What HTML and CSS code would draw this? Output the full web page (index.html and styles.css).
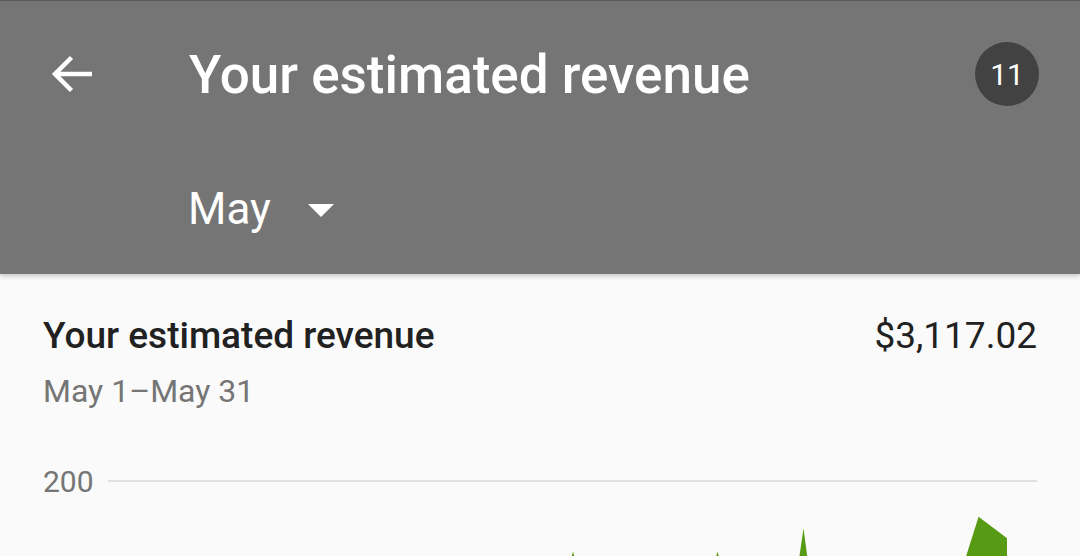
FILE: index.html
```html
<!DOCTYPE html>
<html>
<head>
<meta charset="utf-8">
<link rel="stylesheet" href="styles.css">
</head>
<body>
<header class="appbar">
  <div class="toprow">
    <svg class="back" width="44" height="44" viewBox="0 0 44 44">
      <path d="M42 22H5 M21.5 5.5 L5 22 L21.5 38.5" fill="none" stroke="#fff" stroke-width="4.5" stroke-linecap="butt" stroke-linejoin="miter"/>
    </svg>
    <h1 class="title">Your estimated revenue</h1>
    <div class="badge">11</div>
  </div>
  <div class="periodrow">
    <span class="period">May</span>
    <svg class="caret" width="26" height="13" viewBox="0 0 26 13"><path d="M0 0H26L13 13Z" fill="#fff"/></svg>
  </div>
</header>
<main class="content">
  <div class="summary">
    <div class="summary-head">
      <h2 class="summary-title">Your estimated revenue</h2>
      <span class="amount">$3,117.02</span>
    </div>
    <div class="range">May 1–May 31</div>
  </div>
  <div class="chart">
    <span class="axis-label">200</span>
    <svg class="plot" viewBox="0 0 929 91" preserveAspectRatio="none">
      <rect x="0" y="14" width="929" height="2" fill="#e0e0e0"/>
      <polygon points="461,100 465,85.7 469,100" fill="#579a13"/>
      <polygon points="605.5,100 609.5,85.7 613.5,100" fill="#579a13"/>
      <polygon points="690,100 695.5,62.3 700.5,100" fill="#579a13"/>
      <polygon points="855,100 870.6,50.7 899,72.3 899,100" fill="#579a13"/>
    </svg>
  </div>
</main>
</body>
</html>
```

FILE: styles.css
```css
* { box-sizing: border-box; }
html, body {
  margin: 0;
  padding: 0;
  width: 1080px;
  height: 556px;
  overflow: hidden;
  background: #fafafa;
  font-family: Roboto, "Noto Sans", "Liberation Sans", sans-serif;
}
.appbar {
  height: 274px;
  background: #757575;
  border-top: 1px solid #5a5a5a;
  box-shadow: 0 2px 5px rgba(0, 0, 0, 0.22);
  position: relative;
  z-index: 1;
}
.toprow {
  height: 145px;
  display: flex;
  align-items: center;
  padding: 0 41px 0 50px;
}
.back {
  flex: none;
  display: block;
}
.title {
  margin: 4px 0 0 95px;
  flex: 1;
  font-size: 53px;
  line-height: 1;
  font-weight: 500;
  color: #fff;
  letter-spacing: 0;
}
.badge {
  flex: none;
  width: 64px;
  height: 64px;
  border-radius: 50%;
  background: #424242;
  color: #fff;
  font-size: 30px;
  display: flex;
  align-items: center;
  justify-content: center;
  margin-top: 1px;
}
.periodrow {
  height: 128px;
  display: flex;
  align-items: center;
  padding-left: 188px;
  gap: 37px;
}
.period {
  font-size: 44px;
  line-height: 1;
  color: #fff;
  margin-top: -3px;
}
.caret {
  display: block;
  margin-top: 0;
}
.content {
  padding: 43px 43px 0 43px;
}
.summary-head {
  display: flex;
  justify-content: space-between;
  align-items: baseline;
}
.summary-title {
  margin: 0;
  font-size: 37px;
  line-height: 1;
  font-weight: 500;
  color: #212121;
}
.amount {
  font-size: 37px;
  line-height: 1;
  color: #212121;
}
.range {
  margin-top: 21px;
  font-size: 32px;
  line-height: 1;
  color: #757575;
}
.chart {
  margin-top: 59px;
  display: flex;
  gap: 15px;
  height: 91px;
}
.axis-label {
  width: 50px;
  font-size: 30px;
  line-height: 31px;
  color: #757575;
}
.plot {
  flex: 1;
  height: 91px;
  display: block;
}
```
